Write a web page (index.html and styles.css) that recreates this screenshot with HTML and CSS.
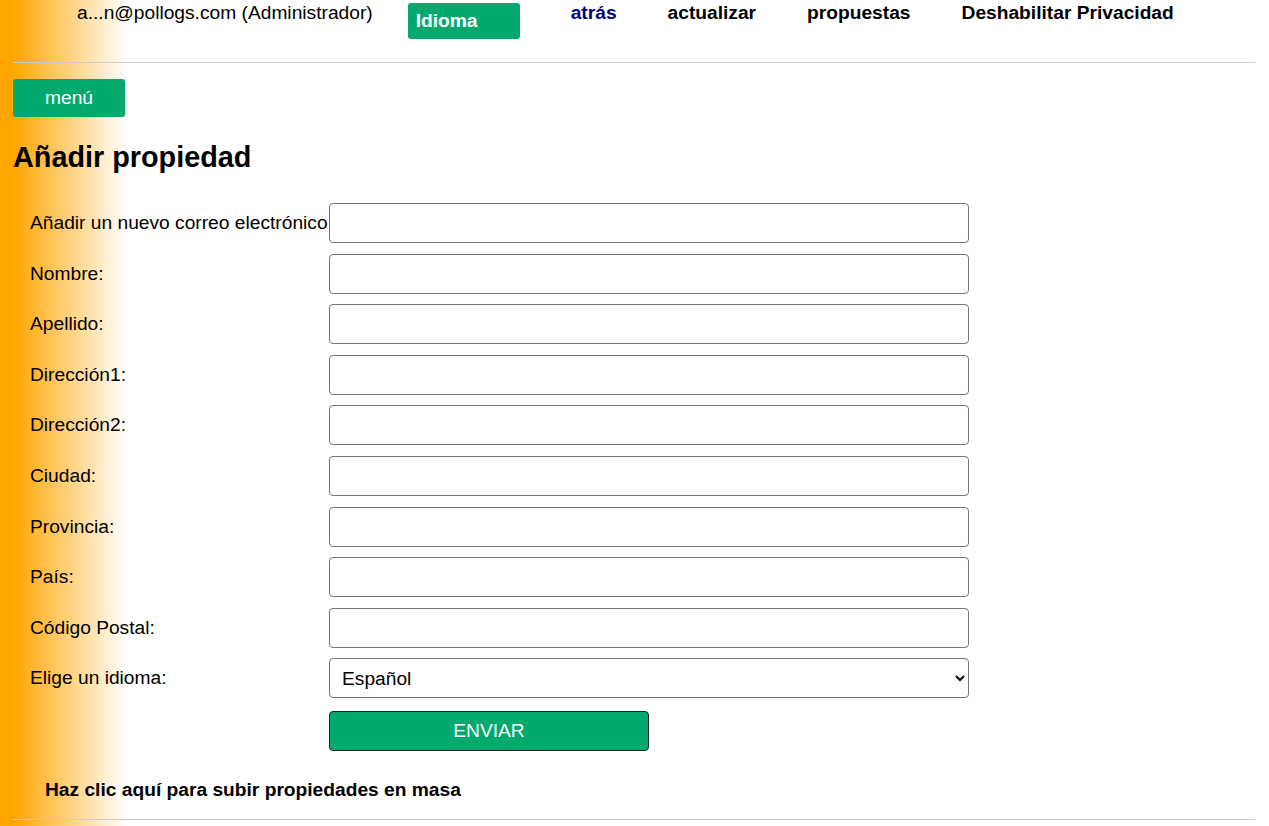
FILE: index.html
```html
<!DOCTYPE html>
<html lang="es">
<head>
    <meta charset="utf-8">
    <title>Añadir propiedad</title>
    <link rel="stylesheet" href="styles.css">
</head>
<body>
    <div class="topbar">
        <span class="user">a...n@pollogs.com (Administrador)</span>
        <button class="lang-btn">Idioma</button>
        <a href="#" class="nav-link back">atrás</a>
        <a href="#" class="nav-link">actualizar</a>
        <a href="#" class="nav-link">propuestas</a>
        <a href="#" class="nav-link">Deshabilitar Privacidad</a>
    </div>
    <hr>

    <button class="menu-btn">menú</button>

    <h1>Añadir propiedad</h1>

    <form class="prop-form">
        <label for="email">Añadir un nuevo correo electrónico</label>
        <input type="text" id="email">

        <label for="first">Nombre:</label>
        <input type="text" id="first">

        <label for="last">Apellido:</label>
        <input type="text" id="last">

        <label for="addr1">Dirección1:</label>
        <input type="text" id="addr1">

        <label for="addr2">Dirección2:</label>
        <input type="text" id="addr2">

        <label for="city">Ciudad:</label>
        <input type="text" id="city">

        <label for="state">Provincia:</label>
        <input type="text" id="state">

        <label for="country">País:</label>
        <input type="text" id="country">

        <label for="zip">Código Postal:</label>
        <input type="text" id="zip">

        <label for="lang">Elige un idioma:</label>
        <select id="lang">
            <option>Español</option>
            <option>English</option>
        </select>

        <span></span>
        <button type="button" class="submit-btn">ENVIAR</button>
    </form>

    <p class="bulk"><a href="#">Haz clic aquí para subir propiedades en masa</a></p>
    <hr>
</body>
</html>
```

FILE: styles.css
```css
html {
    background: #fff;
}

body {
    margin: 0;
    padding: 0 14px 0 13px;
    font-family: "Liberation Sans", Arial, sans-serif;
    font-size: 19.2px;
    color: #000;
    background: linear-gradient(to right, orange 1%, white 10%);
    min-height: 826px;
    box-sizing: border-box;
}

.topbar {
    display: flex;
    align-items: flex-start;
    padding-top: 3px;
    height: 51px;
}

.user {
    margin-left: 64px;
    line-height: 20px;
}

.lang-btn {
    margin-left: 35px;
    width: 112px;
    height: 36px;
    background-color: #04AA6D;
    color: white;
    border: none;
    border-radius: 3px;
    font-family: inherit;
    font-size: 19.2px;
    font-weight: bold;
    text-align: left;
    padding: 0 8px;
    cursor: pointer;
}

.nav-link {
    margin-left: 51px;
    line-height: 20px;
    font-weight: bold;
    color: #000;
    text-decoration: none;
}

.nav-link.back {
    color: #000080;
}

hr {
    border: none;
    border-top: 1px solid #ccc;
    margin: 8px 0 16px 0;
}

.menu-btn {
    display: block;
    width: 112px;
    height: 38px;
    background-color: #04AA6D;
    color: white;
    border: none;
    border-radius: 3px;
    font-family: inherit;
    font-size: 19.2px;
    cursor: pointer;
}

h1 {
    font-size: 28.8px;
    margin: 24px 0 29px 0;
}

.prop-form {
    display: grid;
    grid-template-columns: 299px 640px;
    row-gap: 10.6px;
    align-items: center;
    padding-left: 17px;
}

.prop-form label {
    white-space: nowrap;
}

.prop-form input[type="text"],
.prop-form select {
    height: 40px;
    box-sizing: border-box;
    border: 1px solid #767676;
    border-radius: 4px;
    font-family: inherit;
    font-size: 19.2px;
    background: white;
}

.prop-form select {
    padding: 0 8px;
    color: #000;
}

.submit-btn {
    width: 320px;
    height: 40px;
    margin-top: 2px;
    background-color: #04AA6D;
    color: white;
    border: 1px solid #222;
    border-radius: 4px;
    font-family: inherit;
    font-size: 19.2px;
    cursor: pointer;
}

.bulk {
    margin: 28px 0 18px 32px;
    font-weight: bold;
}

.bulk a {
    color: #000;
    text-decoration: none;
}
```
